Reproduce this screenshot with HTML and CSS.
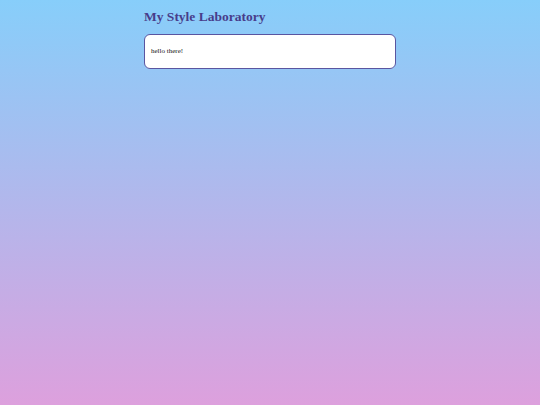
FILE: index.html
```
<!DOCTYPE html>
<html>
<head>
<meta charset="utf-8">
<link rel="stylesheet" href="styles.css">
</head>
<body>
<div class="page">
  <h1 class="title">My Style Laboratory</h1>
  <div class="card"><p class="card-text">hello there!</p></div>
</div>
</body>
</html>
```
FILE: styles.css
```
html, body {
  margin: 0;
  padding: 0;
  height: 100%;
}
body {
  background: linear-gradient(to bottom, #87cefa, #dda0dd);
  font-family: "Liberation Serif", "Times New Roman", serif;
}
.page {
  width: 252px;
  margin: 0 auto;
  padding-top: 9px;
}
.title {
  margin: 0;
  font-size: 13.5px;
  font-weight: bold;
  color: #483d8b;
  line-height: 16px;
}
.card {
  margin-top: 9px;
  background: #fff;
  border: 1px solid #5a55a0;
  border-radius: 6px;
  padding: 11px 6px 12px;
}
.card-text {
  margin: 0;
  font-size: 7px;
  line-height: 10px;
  color: #111;
}
```
